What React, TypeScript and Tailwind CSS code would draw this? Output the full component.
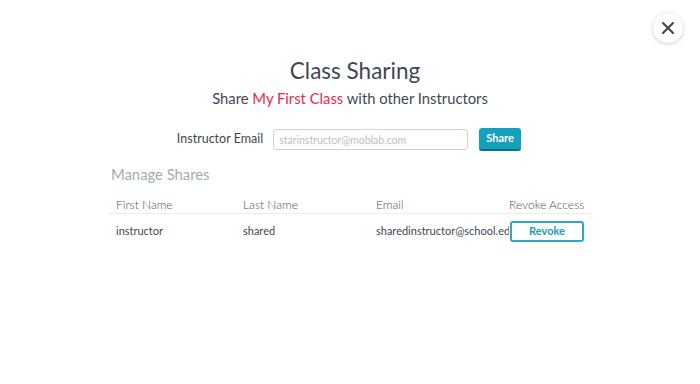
import { X } from "lucide-react";

export default function App() {
    return (
        <div className="relative w-[700px] h-[384px] bg-white text-[#3d4852]" style={{ fontFamily: "Lato, 'Noto Sans', sans-serif" }}>
            <button className="absolute left-[653px] top-[13px] w-[30px] h-[30px] rounded-full bg-white shadow-[0_1px_4px_rgba(0,0,0,0.2)] flex items-center justify-center text-[#3d4852]">
                <X size={20} strokeWidth={2.5} />
            </button>
            <div className="flex flex-col items-center pt-[56px]">
                <h1 className="text-[22.5px] leading-[30px] ml-[10px] text-[#3e4853]">Class Sharing</h1>
                <p className="text-[14.8px] leading-[20px] mt-[2px] text-[#3e4853]">
                    Share <span className="text-[#e8294c]">My First Class</span> with other Instructors
                </p>
                <div className="flex items-center mt-[20px] ml-[-2px]">
                    <span className="text-[12.5px] text-[#3d4852] mr-[10px]">Instructor Email</span>
                    <input
                        className="w-[195px] h-[21px] border border-[#cfd4d9] rounded-[3px] px-[5px] text-[10.5px] placeholder:text-[#b9bfc4] outline-none"
                        placeholder="starinstructor@moblab.com"
                    />
                    <button className="ml-[11px] w-[42px] h-[23px] rounded-[3px] bg-[#15a0bb] border-b-2 border-[#0c6f83] text-white text-[11px] font-bold">
                        Share
                    </button>
                </div>
            </div>
            <div className="mx-[109px] mt-[13px]">
                <h2 className="text-[14.8px] text-[#a2acb5] ml-[2px] leading-[20px]">Manage Shares</h2>
                <div className="mt-[13px] grid grid-cols-[134px_133px_133px_82px] border-b border-[#eaedef] leading-[16px] text-[12px] font-light text-[#4a545d]">
                    <span className="pl-[7px]">First Name</span>
                    <span>Last Name</span>
                    <span>Email</span>
                    <span>Revoke Access</span>
                </div>
                <div className="grid grid-cols-[134px_133px_133px_82px] items-center h-[34px] text-[11px] text-[#3d4852] whitespace-nowrap">
                    <span className="pl-[7px]">instructor</span>
                    <span>shared</span>
                    <span className="overflow-hidden">sharedinstructor@school.edu</span>
                    <button className="ml-[1px] w-[74px] h-[21px] border-2 border-[#2ea8bf] rounded-[3px] text-[#1d9db6] text-[11px] font-bold">
                        Revoke
                    </button>
                </div>
            </div>
        </div>
    );
}
